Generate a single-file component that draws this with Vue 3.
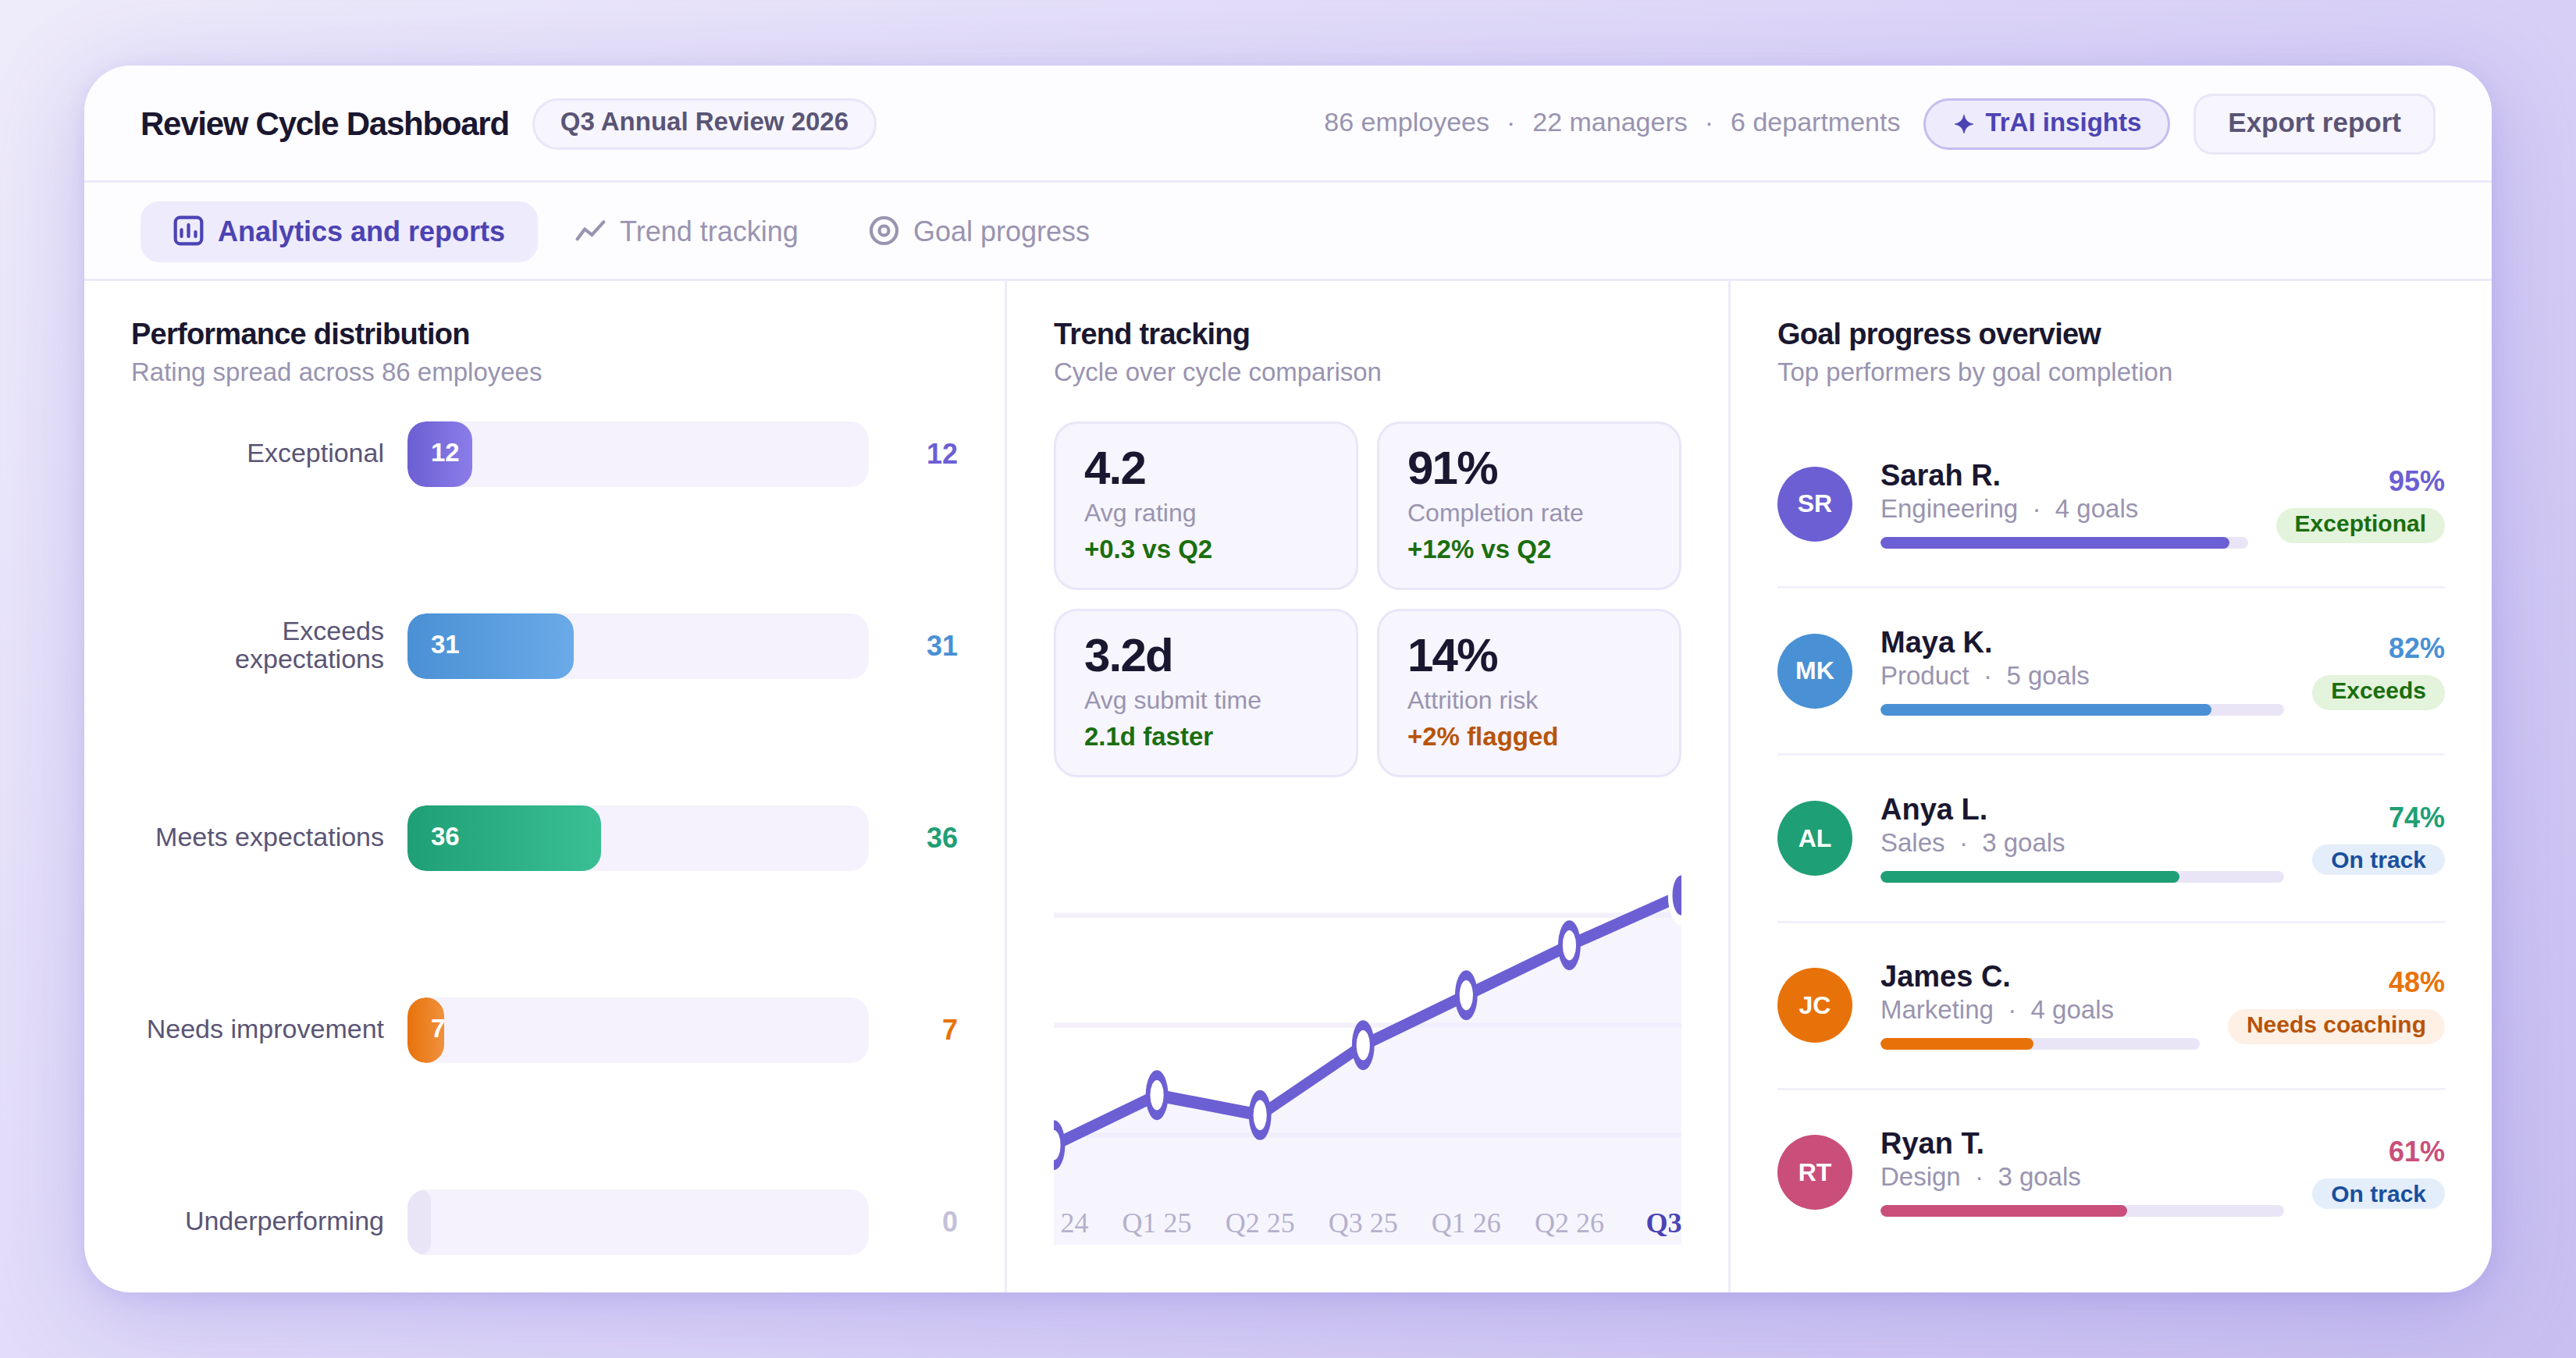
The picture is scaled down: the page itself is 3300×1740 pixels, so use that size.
<script setup>
const stats = ['86 employees', '22 managers', '6 departments']

const ratings = [
  { label: 'Exceptional', count: 12, width: 14, tone: 'violet' },
  { label: 'Exceeds expectations', count: 31, width: 36, tone: 'blue' },
  { label: 'Meets expectations', count: 36, width: 42, tone: 'green' },
  { label: 'Needs improvement', count: 7, width: 8, tone: 'orange' },
  { label: 'Underperforming', count: 0, width: 0, tone: 'empty' },
]

const metrics = [
  { value: '4.2', label: 'Avg rating', delta: '+0.3 vs Q2' },
  { value: '91%', label: 'Completion rate', delta: '+12% vs Q2' },
  { value: '3.2d', label: 'Avg submit time', delta: '2.1d faster' },
  { value: '14%', label: 'Attrition risk', delta: '+2% flagged', warn: true },
]

const points = [
  { x: 0, y: 68, label: 'Q3 24' },
  { x: 46, y: 58, label: 'Q1 25' },
  { x: 92, y: 62, label: 'Q2 25' },
  { x: 138, y: 48, label: 'Q3 25' },
  { x: 184, y: 38, label: 'Q1 26' },
  { x: 230, y: 28, label: 'Q2 26' },
  { x: 280, y: 18, label: 'Q3 26' },
]
const line = points.map((p) => `${p.x},${p.y}`).join(' ')
const area = `${line} 280,88 0,88`

const people = [
  { initials: 'SR', name: 'Sarah R.', team: 'Engineering', goals: 4, progress: 95, badge: 'Exceptional', kind: 'good', tone: 'violet' },
  { initials: 'MK', name: 'Maya K.', team: 'Product', goals: 5, progress: 82, badge: 'Exceeds', kind: 'good', tone: 'blue' },
  { initials: 'AL', name: 'Anya L.', team: 'Sales', goals: 3, progress: 74, badge: 'On track', kind: 'info', tone: 'green' },
  { initials: 'JC', name: 'James C.', team: 'Marketing', goals: 4, progress: 48, badge: 'Needs coaching', kind: 'warn', tone: 'orange' },
  { initials: 'RT', name: 'Ryan T.', team: 'Design', goals: 3, progress: 61, badge: 'On track', kind: 'info', tone: 'pink' },
]
</script>

<template>
  <div class="page">
    <main class="card">
      <header class="header">
        <h1>Review Cycle Dashboard</h1>
        <span class="cycle">Q3 Annual Review 2026</span>
        <div class="stats">
          <template v-for="(stat, i) in stats" :key="stat">
            <span v-if="i">·</span>
            <span>{{ stat }}</span>
          </template>
        </div>
        <button type="button" class="insights">
          <svg class="spark" viewBox="0 0 10 10" aria-hidden="true">
            <path d="M5 1.1Q5.6 4.4 8.9 5 5.6 5.6 5 8.9 4.4 5.6 1.1 5 4.4 4.4 5 1.1Z" fill="currentColor" stroke="currentColor" stroke-width="0.3" />
          </svg>
          <span>TrAI insights</span>
        </button>
        <button type="button" class="export">Export report</button>
      </header>

      <nav class="tabs">
        <button type="button" class="tab active">
          <svg viewBox="0 0 13 13" fill="none" stroke="currentColor" stroke-linecap="round" aria-hidden="true">
            <rect x="0.9" y="0.9" width="11.2" height="11.2" rx="2" stroke-width="1.4" />
            <path d="M3.5 9V6.1M6.5 9V4M9.5 9V7" stroke-width="1.4" />
          </svg>
          Analytics and reports
        </button>
        <button type="button" class="tab">
          <svg viewBox="0 0 13 13" fill="none" stroke="currentColor" stroke-linecap="round" aria-hidden="true">
            <path d="M0.9 10.1 4 5.9 7.1 8.3 12.1 2.8" stroke-width="1.4" />
          </svg>
          Trend tracking
        </button>
        <button type="button" class="tab">
          <svg viewBox="0 0 13 13" fill="none" stroke="currentColor" aria-hidden="true">
            <circle cx="6.5" cy="6.5" r="5.5" stroke-width="1.4" />
            <circle cx="6.5" cy="6.5" r="2" stroke-width="1.4" />
          </svg>
          Goal progress
        </button>
      </nav>

      <div class="columns">
        <section class="column">
          <h2>Performance distribution</h2>
          <p class="sub">Rating spread across 86 employees</p>
          <div class="ratings">
            <div v-for="r in ratings" :key="r.label" class="rating">
              <span class="rating-label">{{ r.label }}</span>
              <div class="track">
                <div class="fill" :class="r.tone" :style="{ width: r.width + '%' }">
                  <template v-if="r.count">{{ r.count }}</template>
                </div>
              </div>
              <span class="count" :class="r.tone">{{ r.count }}</span>
            </div>
          </div>
        </section>

        <section class="column">
          <h2>Trend tracking</h2>
          <p class="sub">Cycle over cycle comparison</p>
          <div class="metrics">
            <div v-for="m in metrics" :key="m.label" class="metric">
              <strong>{{ m.value }}</strong>
              <span class="metric-label">{{ m.label }}</span>
              <span class="delta" :class="{ warn: m.warn }">{{ m.delta }}</span>
            </div>
          </div>
          <div class="chart">
            <svg class="plot" role="img" aria-label="Average rating by cycle">
              <svg width="100%" height="100%" viewBox="0 0 280 90" preserveAspectRatio="none">
                <path d="M0 22H280M0 44H280M0 66H280" stroke="#f3f0fc" stroke-width="1" />
                <polygon :points="area" fill="#eeebfd" fill-opacity="0.5" />
                <polyline :points="line" fill="none" stroke="#6c5fd3" stroke-width="2.5" stroke-linejoin="round" />
                <circle
                  v-for="(p, i) in points"
                  :key="p.label"
                  :cx="p.x"
                  :cy="p.y"
                  :r="i === points.length - 1 ? 5 : 4"
                  :fill="i === points.length - 1 ? '#6c5fd3' : '#fff'"
                  :stroke="i === points.length - 1 ? '#fff' : '#6c5fd3'"
                  stroke-width="2"
                />
              </svg>
              <text
                v-for="(p, i) in points"
                :key="p.label"
                class="tick"
                :class="{ current: i === points.length - 1 }"
                :x="(p.x / 280) * 100 + '%'"
                y="95%"
                text-anchor="middle"
              >{{ p.label }}</text>
            </svg>
          </div>
        </section>

        <section class="column">
          <h2>Goal progress overview</h2>
          <p class="sub">Top performers by goal completion</p>
          <ul class="people">
            <li v-for="p in people" :key="p.initials" class="person">
              <span class="avatar" :class="p.tone">{{ p.initials }}</span>
              <div class="info">
                <span class="name">{{ p.name }}</span>
                <span class="team">{{ p.team }} &nbsp;·&nbsp; {{ p.goals }} goals</span>
                <div class="progress">
                  <div class="progress-fill" :class="p.tone" :style="{ width: p.progress + '%' }"></div>
                </div>
              </div>
              <div class="result">
                <span class="percent" :class="p.tone">{{ p.progress }}%</span>
                <span class="badge" :class="p.kind">{{ p.badge }}</span>
              </div>
            </li>
          </ul>
        </section>
      </div>
    </main>
  </div>
</template>

<style>
body {
  margin: 0;
}
</style>

<style scoped>
* {
  box-sizing: border-box;
}

.page {
  display: flex;
  min-height: 100vh;
  padding: 84px 108px;
  background: linear-gradient(135deg, #eeebfa 0%, #ddd6f8 50%, #c9c0f0 100%);
  color: #1a1730;
  font-family: "Liberation Sans", Arial, sans-serif;
}

.card {
  display: flex;
  flex: 1;
  flex-direction: column;
  min-width: 0;
  overflow: hidden;
  border-radius: 60px;
  background: #fff;
  box-shadow: 0 24px 120px rgba(108, 95, 211, 0.28), 0 6px 24px rgba(108, 95, 211, 0.12);
}

button {
  display: flex;
  align-items: center;
  margin: 0;
  font-family: inherit;
  cursor: pointer;
}

/* Header */
.header {
  display: flex;
  align-items: center;
  gap: 30px;
  height: 150px;
  padding: 3px 72px 0;
  border-bottom: 3px solid #edeaf9;
  background: #fdfcff;
}

h1 {
  margin: 0;
  font-size: 42px;
  line-height: 48px;
  font-weight: 700;
  letter-spacing: -0.03em;
}

.cycle,
.insights {
  height: 66px;
  border: 3px solid #e9e6f8;
  border-radius: 33px;
  background: #f7f5fd;
  color: #5a5575;
  font-size: 33px;
  line-height: 36px;
  font-weight: 700;
}

.cycle {
  padding: 9px 33px;
}

.stats {
  display: flex;
  gap: 22px;
  margin-left: auto;
  padding-bottom: 6px;
  color: #9994b0;
  font-size: 34px;
  line-height: 36px;
}

.insights {
  gap: 12px;
  padding: 0 34px;
  border-color: #c5bdee;
  background: #eeebfc;
  color: #4c43b3;
}

.insights span {
  padding-bottom: 4px;
}

.spark {
  width: 30px;
  height: 30px;
}

.export {
  height: 78px;
  padding: 0 41px 4px;
  border: 3px solid #e9e6f8;
  border-radius: 24px;
  background: #f7f5fd;
  color: #5a5575;
  font-size: 35px;
  font-weight: 700;
}

/* Tabs */
.tabs {
  display: flex;
  align-items: center;
  gap: 6px;
  height: 126px;
  padding: 3px 72px 0;
  border-bottom: 3px solid #edeaf9;
  background: #fdfcff;
}

.tab {
  gap: 18px;
  height: 78px;
  padding: 0 42px;
  border: 0;
  border-radius: 24px;
  background: none;
  color: #9994b0;
  font-size: 36px;
}

.tab svg {
  width: 39px;
  height: 39px;
  margin-bottom: 3px;
}

.tab.active {
  background: #eeebfc;
  color: #4c43b3;
  font-weight: 700;
}

/* Columns */
.columns {
  display: grid;
  flex: 1;
  grid-template-columns: 394fr 309fr 325fr;
}

.column {
  display: flex;
  flex-direction: column;
  min-width: 0;
  padding: 48px 60px;
}

.column:not(:last-child) {
  border-right: 3px solid #edeaf9;
}

h2 {
  margin: 0;
  font-size: 38px;
  line-height: 40px;
  font-weight: 700;
  letter-spacing: -0.02em;
}

.sub {
  margin: 9px 0 44px;
  color: #9994b0;
  font-size: 33px;
  line-height: 39px;
}

/* Rating bars */
.ratings {
  display: flex;
  flex: 1;
  flex-direction: column;
  justify-content: space-between;
}

.rating {
  display: flex;
  align-items: center;
  gap: 30px;
}

.rating-label {
  width: 324px;
  padding-bottom: 4px;
  color: #5a5575;
  font-size: 34px;
  line-height: 36px;
  text-align: right;
}

.track {
  flex: 1;
  height: 84px;
  overflow: hidden;
  border-radius: 24px;
  background: #f5f2fd;
}

.fill {
  display: flex;
  align-items: center;
  height: 100%;
  padding: 0 0 4px 30px;
  border-radius: 24px;
  color: #fff;
  font-size: 33px;
  font-weight: 700;
}

.fill.violet {
  background: linear-gradient(90deg, #6c5fd3, #8b7de8);
}

.fill.blue {
  background: linear-gradient(90deg, #4a90d4, #6aaae8);
}

.fill.green {
  background: linear-gradient(90deg, #1f9f75, #3abf94);
}

.fill.orange {
  background: linear-gradient(90deg, #e8720a, #f0913e);
}

.fill.empty {
  background: #e9e5f6;
}

.count {
  width: 84px;
  font-size: 36px;
  font-weight: 700;
  text-align: right;
}

.count.violet,
.percent.violet {
  color: #6c5fd3;
}

.count.blue,
.percent.blue {
  color: #4a90d4;
}

.count.green,
.percent.green {
  color: #1f9f75;
}

.count.orange,
.percent.orange {
  color: #e8720a;
}

.count.empty {
  color: #c5c0d8;
}

.percent.pink {
  color: #c94f7a;
}

/* Metrics */
.metrics {
  display: grid;
  grid-template-columns: 1fr 1fr;
  gap: 24px;
}

.metric {
  display: flex;
  flex-direction: column;
  gap: 9px;
  padding: 27px 36px 30px;
  border: 3px solid #e9e6f8;
  border-radius: 30px;
  background: #f7f5fd;
}

.metric strong {
  font-size: 60px;
  line-height: 60px;
  letter-spacing: -0.03em;
}

.metric-label {
  color: #9994b0;
  font-size: 32px;
  line-height: 36px;
}

.delta {
  color: #1a6e0e;
  font-size: 33px;
  line-height: 39px;
  font-weight: 700;
}

.delta.warn {
  color: #b85408;
}

/* Chart */
.chart {
  display: flex;
  flex: 1;
  min-height: 300px;
  margin-top: 36px;
}

.plot {
  flex: 1;
  width: 100%;
  height: auto;
  overflow: hidden;
}

.tick {
  fill: #b5b0cc;
  font-family: "Liberation Serif", "Times New Roman", serif;
  font-size: 36px;
}

.tick.current {
  fill: #4c43b3;
  font-weight: 700;
}

/* People */
.people {
  display: flex;
  flex: 1;
  flex-direction: column;
  margin: 0;
  padding: 0;
  list-style: none;
}

.person {
  display: flex;
  flex: 1;
  align-items: center;
  gap: 36px;
}

.person:not(:last-child) {
  border-bottom: 3px solid #f3f0fc;
}

.avatar {
  display: flex;
  align-items: center;
  justify-content: center;
  width: 96px;
  height: 96px;
  border-radius: 50%;
  color: #fff;
  font-size: 32px;
  font-weight: 700;
}

.info {
  display: flex;
  flex: 1;
  flex-direction: column;
}

.name {
  font-size: 38px;
  line-height: 40px;
  font-weight: 700;
}

.team {
  margin: 3px 0 17px;
  color: #9994b0;
  font-size: 33px;
  line-height: 39px;
}

.progress {
  height: 15px;
  overflow: hidden;
  border-radius: 8px;
  background: #e9e5f6;
}

.progress-fill {
  height: 100%;
  border-radius: 8px;
}

.avatar.violet,
.progress-fill.violet {
  background: #6c5fd3;
}

.avatar.blue,
.progress-fill.blue {
  background: #4a90d4;
}

.avatar.green,
.progress-fill.green {
  background: #1f9f75;
}

.avatar.orange,
.progress-fill.orange {
  background: #e8720a;
}

.avatar.pink,
.progress-fill.pink {
  background: #c94f7a;
}

.result {
  display: flex;
  flex-direction: column;
  align-items: flex-end;
  gap: 12px;
  padding-bottom: 2px;
}

.percent {
  font-size: 36px;
  line-height: 45px;
  font-weight: 700;
}

.badge {
  height: 45px;
  padding: 0 24px;
  border-radius: 23px;
  font-size: 30px;
  line-height: 39px;
  font-weight: 700;
}

.badge.good {
  background: #e3f3dc;
  color: #1a6e0e;
}

.badge.info {
  background: #e4eefa;
  color: #1a4f9c;
}

.badge.warn {
  background: #fef0e5;
  color: #b85408;
}
</style>
